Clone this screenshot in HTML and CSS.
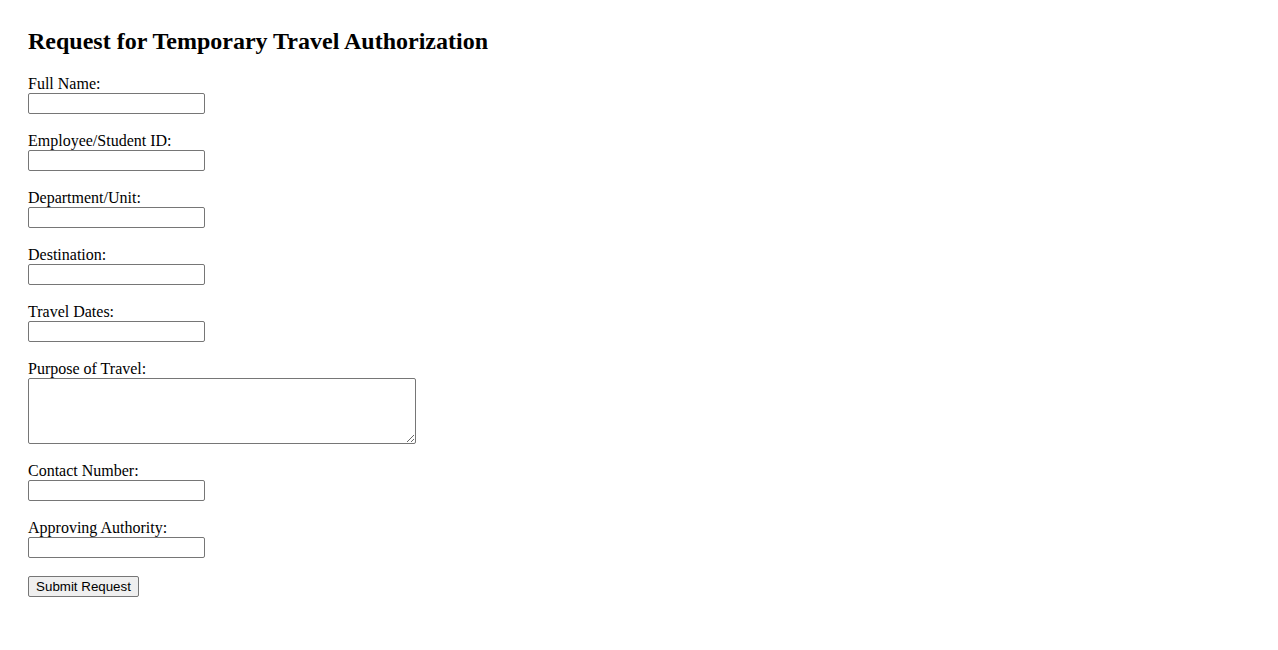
FILE: index.html
```html
<!DOCTYPE html>
<html lang="en">
<head>
<meta charset="utf-8">
<title>Request for Temporary Travel Authorization</title>
<link rel="stylesheet" href="styles.css">
</head>
<body>
<main class="page">
  <h2 class="title">Request for Temporary Travel Authorization</h2>
  <form class="form">
    <div class="field">
      <label class="label" for="name">Full Name:</label>
      <input class="input" id="name" type="text">
    </div>
    <div class="field">
      <label class="label" for="eid">Employee/Student ID:</label>
      <input class="input" id="eid" type="text">
    </div>
    <div class="field">
      <label class="label" for="dept">Department/Unit:</label>
      <input class="input" id="dept" type="text">
    </div>
    <div class="field">
      <label class="label" for="dest">Destination:</label>
      <input class="input" id="dest" type="text">
    </div>
    <div class="field">
      <label class="label" for="dates">Travel Dates:</label>
      <input class="input" id="dates" type="text">
    </div>
    <div class="field">
      <label class="label" for="purpose">Purpose of Travel:</label>
      <textarea class="textarea" id="purpose"></textarea>
    </div>
    <div class="field">
      <label class="label" for="contact">Contact Number:</label>
      <input class="input" id="contact" type="text">
    </div>
    <div class="field">
      <label class="label" for="auth">Approving Authority:</label>
      <input class="input" id="auth" type="text">
    </div>
    <div class="field">
      <button class="button" type="submit">Submit Request</button>
    </div>
  </form>
</main>
</body>
</html>
```

FILE: styles.css
```css
html, body {
  margin: 0;
  padding: 0;
  background: #ffffff;
}

body {
  font-family: "Liberation Serif", "Times New Roman", serif;
  font-size: 16px;
  color: #000000;
}

.page {
  padding: 27px 28px 28px 28px;
}

.title {
  margin: 0 0 20px 0;
  font-size: 24px;
  line-height: 28px;
  font-weight: bold;
}

.form {
  display: flex;
  flex-direction: column;
  align-items: flex-start;
  gap: 18px;
}

.field {
  display: flex;
  flex-direction: column;
  align-items: flex-start;
}

.label {
  display: block;
  line-height: 18px;
  height: 18px;
}

.input {
  box-sizing: border-box;
  width: 177px;
  height: 21px;
  margin: 0;
  padding: 1px 2px;
  border: 1px solid #767676;
  border-radius: 2px;
  background: #ffffff;
  font-family: "Liberation Sans", Arial, sans-serif;
  font-size: 13.33px;
}

.textarea {
  box-sizing: border-box;
  width: 388px;
  height: 66px;
  margin: 0;
  padding: 2px;
  border: 1px solid #767676;
  border-radius: 2px;
  background: #ffffff;
  font-family: "Liberation Mono", monospace;
  font-size: 13.33px;
  resize: both;
}

.button {
  box-sizing: border-box;
  width: 111px;
  height: 21px;
  margin: 0;
  padding: 1px 6px;
  border: 1px solid #767676;
  border-radius: 2px;
  background: #efefef;
  color: #000000;
  font-family: "Liberation Sans", Arial, sans-serif;
  font-size: 13.33px;
  line-height: 17px;
}
```
